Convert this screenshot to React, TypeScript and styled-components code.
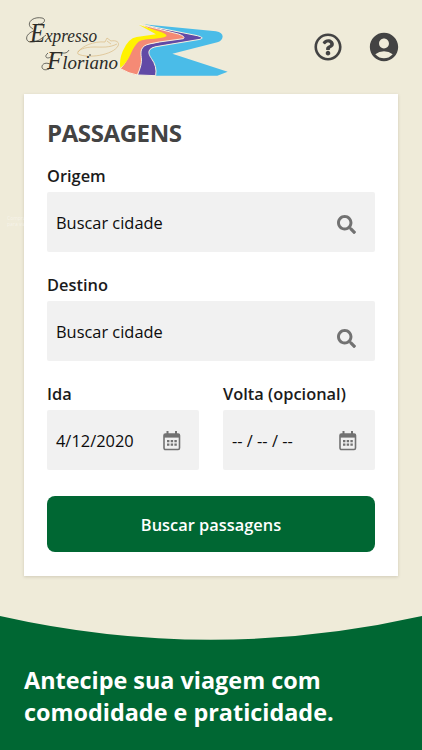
import React from "react";
import styled, { createGlobalStyle } from "styled-components";
import { FaSearch, FaRegQuestionCircle } from "react-icons/fa";
import { MdAccountCircle } from "react-icons/md";

const GlobalStyle = createGlobalStyle`
  * { box-sizing: border-box; }
  body { margin: 0; background: #efebd9; font-family: "Open Sans", "Noto Sans", sans-serif; color: #1b1b1b; }
`;
const Page = styled.div`
  height: 750px; overflow: hidden; display: flex; flex-direction: column; position: relative;
`;
const Header = styled.header`
  height: 94px; flex: none; display: flex; align-items: flex-start; justify-content: space-between;
  padding: 10px 21px 0 20px;
`;
const LogoDrawing = styled.svg`
  width: 212px; height: 72px; display: block;
`;
const LogoText = styled.text`
  font-family: "Liberation Serif", serif; font-style: italic; font-size: 19px; fill: #2c2c28;
`;
const Actions = styled.nav`
  display: flex; align-items: center; gap: 25px; height: 74px; color: #434343;
`;
const IconButton = styled.button<{ $size: number }>`
  border: 0; padding: 0; background: none; color: inherit; display: flex;
  svg { width: ${(p) => p.$size}px; height: ${(p) => p.$size}px; }
`;
const Card = styled.form`
  flex: none; margin: 0 24px; height: 482px; background: #fff; padding: 24px 23px 0;
  box-shadow: 0 1px 3px rgba(80, 75, 50, 0.2);
`;
const Title = styled.h1`
  margin: 0; font-size: 24px; line-height: 30px; font-weight: 700; color: #434343; letter-spacing: -0.4px;
`;
const Field = styled.div<{ $top?: number }>`
  margin-top: ${(p) => p.$top ?? 0}px; flex: 1;
`;
const Label = styled.label`
  display: block; font-size: 16.4px; line-height: 24px; height: 29px; padding-top: 1px; font-weight: 600;
`;
const InputBox = styled.div<{ $pad: number; $drop?: number }>`
  height: 60px; background: #f1f1f1; border-radius: 2px; display: flex; align-items: center;
  justify-content: space-between; padding: 1px ${(p) => p.$pad}px 0 9px; font-size: 16.4px; color: #0c0c0c; white-space: nowrap;
  svg { flex: none; color: #727272; margin-top: ${(p) => p.$drop ?? 3}px; }
`;
const DateRow = styled.div`
  display: flex; gap: 24px; margin-top: 20px;
`;
const Submit = styled.button`
  display: block; width: 100%; height: 56px; margin-top: 26px; padding: 1px 0 0; border: 0; border-radius: 8px;
  background: #006733; color: #fff; font: 600 16.4px "Open Sans", sans-serif;
`;
const Curve = styled.svg`
  display: block; width: 100%; height: 26px; margin-top: 39px; flex: none;
`;
const Promo = styled.section`
  flex: 1; margin-top: -1px; background: #006733; color: #fff; padding: 25px 24px 0;
`;
const PromoTitle = styled.h2`
  margin: 0; font-size: 23.4px; line-height: 31.5px; font-weight: 700;
`;
const Watermark = styled.div`
  position: absolute; left: 7px; top: 215px; font-size: 5px; line-height: 6px; color: #fff; opacity: 0.45;
`;

function Logo() {
  return (
    <LogoDrawing viewBox="20 10 212 72" role="img" aria-label="Expresso Floriano">
      <path
        fill="none" stroke="#d9b77c" strokeWidth=".65"
        d="M78 52C82 46 94 41 105 42L107 38L111 41C116 40 120 42 118 46C113 55 88 59 78 54C76 51 83 47 94 47C102 47 109 48 117 44M107 41L111 44"
      />
      <LogoText x="30" y="41.8" textLength="67" lengthAdjust="spacingAndGlyphs"><tspan fontSize="27">E</tspan>xpresso</LogoText>
      <LogoText x="47" y="69" textLength="71" lengthAdjust="spacingAndGlyphs"><tspan fontSize="25">F</tspan>loriano</LogoText>
      <g fill="none" stroke="#30302c" strokeWidth=".7">
        <path d="M33 29C25 25 31 16 42 18C47 19 44 25 38 24M34 31C24 34 25 43 32 42C38 42 42 38 46 35" />
        <path d="M48 53C42 58 50 61 54 53C59 51 66 56 69 50M50 64C40 60 39 73 49 69" />
      </g>
      <circle cx="90" cy="55" r=".8" fill="#30302c" />
      <g transform="translate(110 10) scale(.3333)" stroke="#f6f1df" strokeWidth="3">
        <path fill="#4abce8" stroke="none" d="M100 43L318 64Q338 68 338 80Q336 93 322 97L187 131L353 185L322 197H137Q141 171 127 153C113 136 112 118 131 112L280 84Z" />
        <path fill="#614aa6" d="M92 43L262 77Q285 83 270 88L144 109C111 114 113 129 124 145Q142 169 137 197L83 195C88 157 78 123 105 104L200 84Z" />
        <path fill="#f58a75" d="M90 43L205 72Q228 80 220 86L148 96L118 102C92 108 91 124 94 143Q97 163 82 195Q57 191 31 176C65 142 59 96 84 89L160 77Z" />
        <path fill="#fff200" stroke="none" d="M86 44L155 67Q173 74 169 79Q160 85 112 88Q90 89 80 101C60 125 63 146 31 174Q27 151 38 124Q55 84 80 81L138 73Z" />
      </g>
    </LogoDrawing>
  );
}

function CalendarIcon() {
  return (
    <svg width="18" height="20" viewBox="0 0 18 20">
      <path d="M4.5 0v4M13 0v4" stroke="currentColor" strokeWidth="2" />
      <rect x="1" y="3" width="15.5" height="15.5" rx="1.4" fill="none" stroke="currentColor" strokeWidth="1.6" />
      <path fill="currentColor" d="M1 3h15.5v3.6H1z" />
      <path d="M4 10.2h10M4 13.7h10" stroke="currentColor" strokeWidth="2.3" strokeDasharray="2.4 1.3" />
    </svg>
  );
}

export default function App() {
  return (
    <>
      <GlobalStyle />
      <Page>
        <Header>
          <Logo />
          <Actions>
            <IconButton $size={28} type="button" aria-label="Ajuda"><FaRegQuestionCircle /></IconButton>
            <IconButton $size={34} type="button" aria-label="Conta"><MdAccountCircle /></IconButton>
          </Actions>
        </Header>
        <Card>
          <Title>PASSAGENS</Title>
          <Field $top={15}>
            <Label>Origem</Label>
            <InputBox $pad={19}>Buscar cidade<FaSearch size={19} /></InputBox>
          </Field>
          <Field $top={20}>
            <Label>Destino</Label>
            <InputBox $pad={19} $drop={13}>Buscar cidade<FaSearch size={19} /></InputBox>
          </Field>
          <DateRow>
            <Field>
              <Label>Ida</Label>
              <InputBox $pad={18} $drop={1}>4/12/2020<CalendarIcon /></InputBox>
            </Field>
            <Field>
              <Label>Volta (opcional)</Label>
              <InputBox $pad={18} $drop={1}>-- / -- / --<CalendarIcon /></InputBox>
            </Field>
          </DateRow>
          <Submit type="button">Buscar passagens</Submit>
        </Card>
        <Curve viewBox="0 0 422 26" preserveAspectRatio="none">
          <path fill="#006733" d="M0 1Q211 48.5 422 1V26H0Z" />
        </Curve>
        <Promo>
          <PromoTitle>Antecipe sua viagem com comodidade e praticidade.</PromoTitle>
        </Promo>
        <Watermark>Compra<br />para viagem</Watermark>
      </Page>
    </>
  );
}
